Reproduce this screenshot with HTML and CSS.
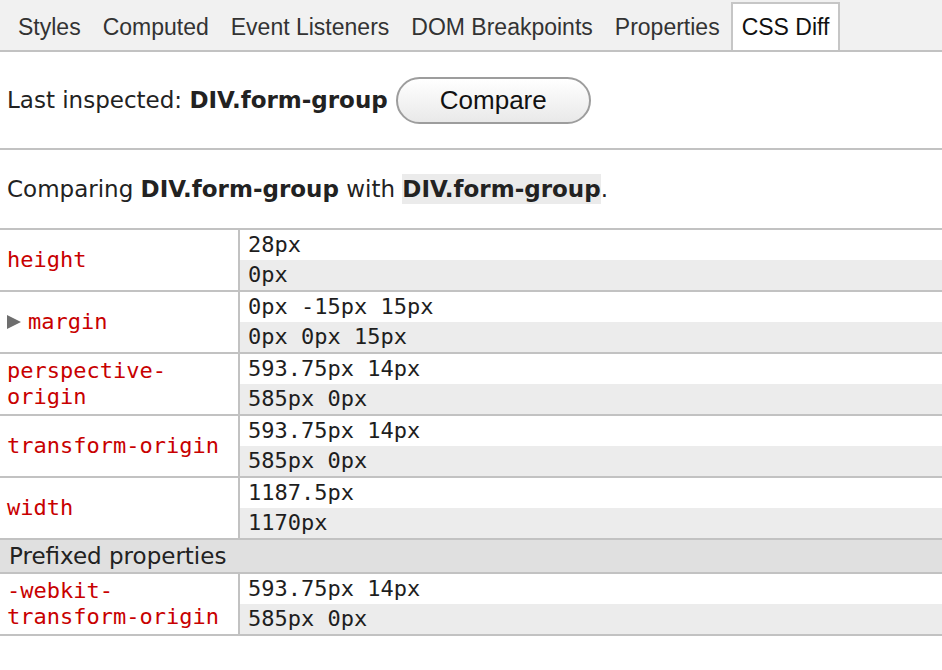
FILE: index.html
```html
<!DOCTYPE html>
<html>
<head>
<meta charset="utf-8">
<link rel="stylesheet" href="styles.css">
</head>
<body>
<div class="tabbar">
  <div class="tab">Styles</div>
  <div class="tab">Computed</div>
  <div class="tab">Event Listeners</div>
  <div class="tab">DOM Breakpoints</div>
  <div class="tab">Properties</div>
  <div class="tab active">CSS Diff</div>
</div>
<div class="inspect">
  <span>Last inspected: <b>DIV.form-group</b></span>
  <button class="compare">Compare</button>
</div>
<div class="comparing">
  <span>Comparing <b>DIV.form-group</b> with <b class="hl">DIV.form-group</b>.</span>
</div>
<div class="diff">
  <div class="row">
    <div class="name">height</div>
    <div class="vals"><div class="v">28px</div><div class="v alt">0px</div></div>
  </div>
  <div class="row">
    <div class="name"><svg class="tri" width="14" height="14" viewBox="0 0 14 14"><polygon points="0,0 14,7 0,14" fill="#6e6e6e"/></svg><span class="mname">margin</span></div>
    <div class="vals"><div class="v">0px -15px 15px</div><div class="v alt">0px 0px 15px</div></div>
  </div>
  <div class="row">
    <div class="name">perspective-<br>origin</div>
    <div class="vals"><div class="v">593.75px 14px</div><div class="v alt">585px 0px</div></div>
  </div>
  <div class="row">
    <div class="name">transform-origin</div>
    <div class="vals"><div class="v">593.75px 14px</div><div class="v alt">585px 0px</div></div>
  </div>
  <div class="row">
    <div class="name">width</div>
    <div class="vals"><div class="v">1187.5px</div><div class="v alt">1170px</div></div>
  </div>
  <div class="group">Prefixed properties</div>
  <div class="row">
    <div class="name">-webkit-<br>transform-origin</div>
    <div class="vals"><div class="v">593.75px 14px</div><div class="v alt">585px 0px</div></div>
  </div>
</div>
</body>
</html>
```
FILE: styles.css
```css
html, body {
  margin: 0;
  padding: 0;
  background: #ffffff;
}
body {
  font-family: "DejaVu Sans", "Liberation Sans", sans-serif;
  color: #222222;
  width: 942px;
}
.tabbar {
  display: flex;
  align-items: flex-end;
  height: 50px;
  padding-left: 7px;
  background: #f1f1f1;
  border-bottom: 2px solid #c2c2c2;
}
.tab {
  font-family: "Liberation Sans", Arial, sans-serif;
  font-size: 23px;
  color: #333333;
  height: 48px;
  box-sizing: border-box;
  line-height: 47px;
  padding: 0 9px;
  border: 2px solid transparent;
  border-bottom: none;
  white-space: nowrap;
}
.tab.active {
  background: #ffffff;
  border-color: #c6c6c6;
  color: #111111;
}
.inspect {
  display: flex;
  align-items: center;
  height: 96px;
  padding-left: 7px;
  border-bottom: 2px solid #c2c2c2;
  font-size: 23px;
}
.inspect b, .comparing b {
  font-weight: bold;
}
.compare {
  margin-left: 8px;
  width: 195px;
  height: 47px;
  border: 2px solid #9d9d9d;
  border-radius: 24px;
  background: linear-gradient(#ffffff, #e9e9e9);
  font-family: "Liberation Sans", Arial, sans-serif;
  font-size: 26px;
  color: #111111;
  padding: 0;
}
.comparing {
  display: flex;
  align-items: center;
  height: 78px;
  padding-left: 7px;
  font-size: 23px;
}
.hl {
  background: #ebebeb;
  padding: 2px 0;
}
.diff {
  border-top: 2px solid #c2c2c2;
}
.row {
  display: flex;
  border-bottom: 2px solid #c2c2c2;
}
.name {
  width: 240px;
  box-sizing: border-box;
  border-right: 2px solid #c2c2c2;
  flex-shrink: 0;
  display: flex;
  align-items: center;
  padding-left: 7px;
  font-family: "DejaVu Sans Mono", monospace;
  font-size: 22px;
  line-height: 26px;
  color: #c80000;
}
.tri {
  margin-right: 7px;
  flex-shrink: 0;
}
.vals {
  flex: 1;
}
.v {
  height: 30px;
  line-height: 30px;
  padding-left: 8px;
  font-family: "DejaVu Sans Mono", monospace;
  font-size: 22px;
  color: #1e1e1e;
  white-space: pre;
}
.v.alt {
  background: #ececec;
}
.group {
  height: 32px;
  line-height: 32px;
  padding-left: 9px;
  background: #e0e0e0;
  border-bottom: 2px solid #c2c2c2;
  font-size: 23px;
}
```
